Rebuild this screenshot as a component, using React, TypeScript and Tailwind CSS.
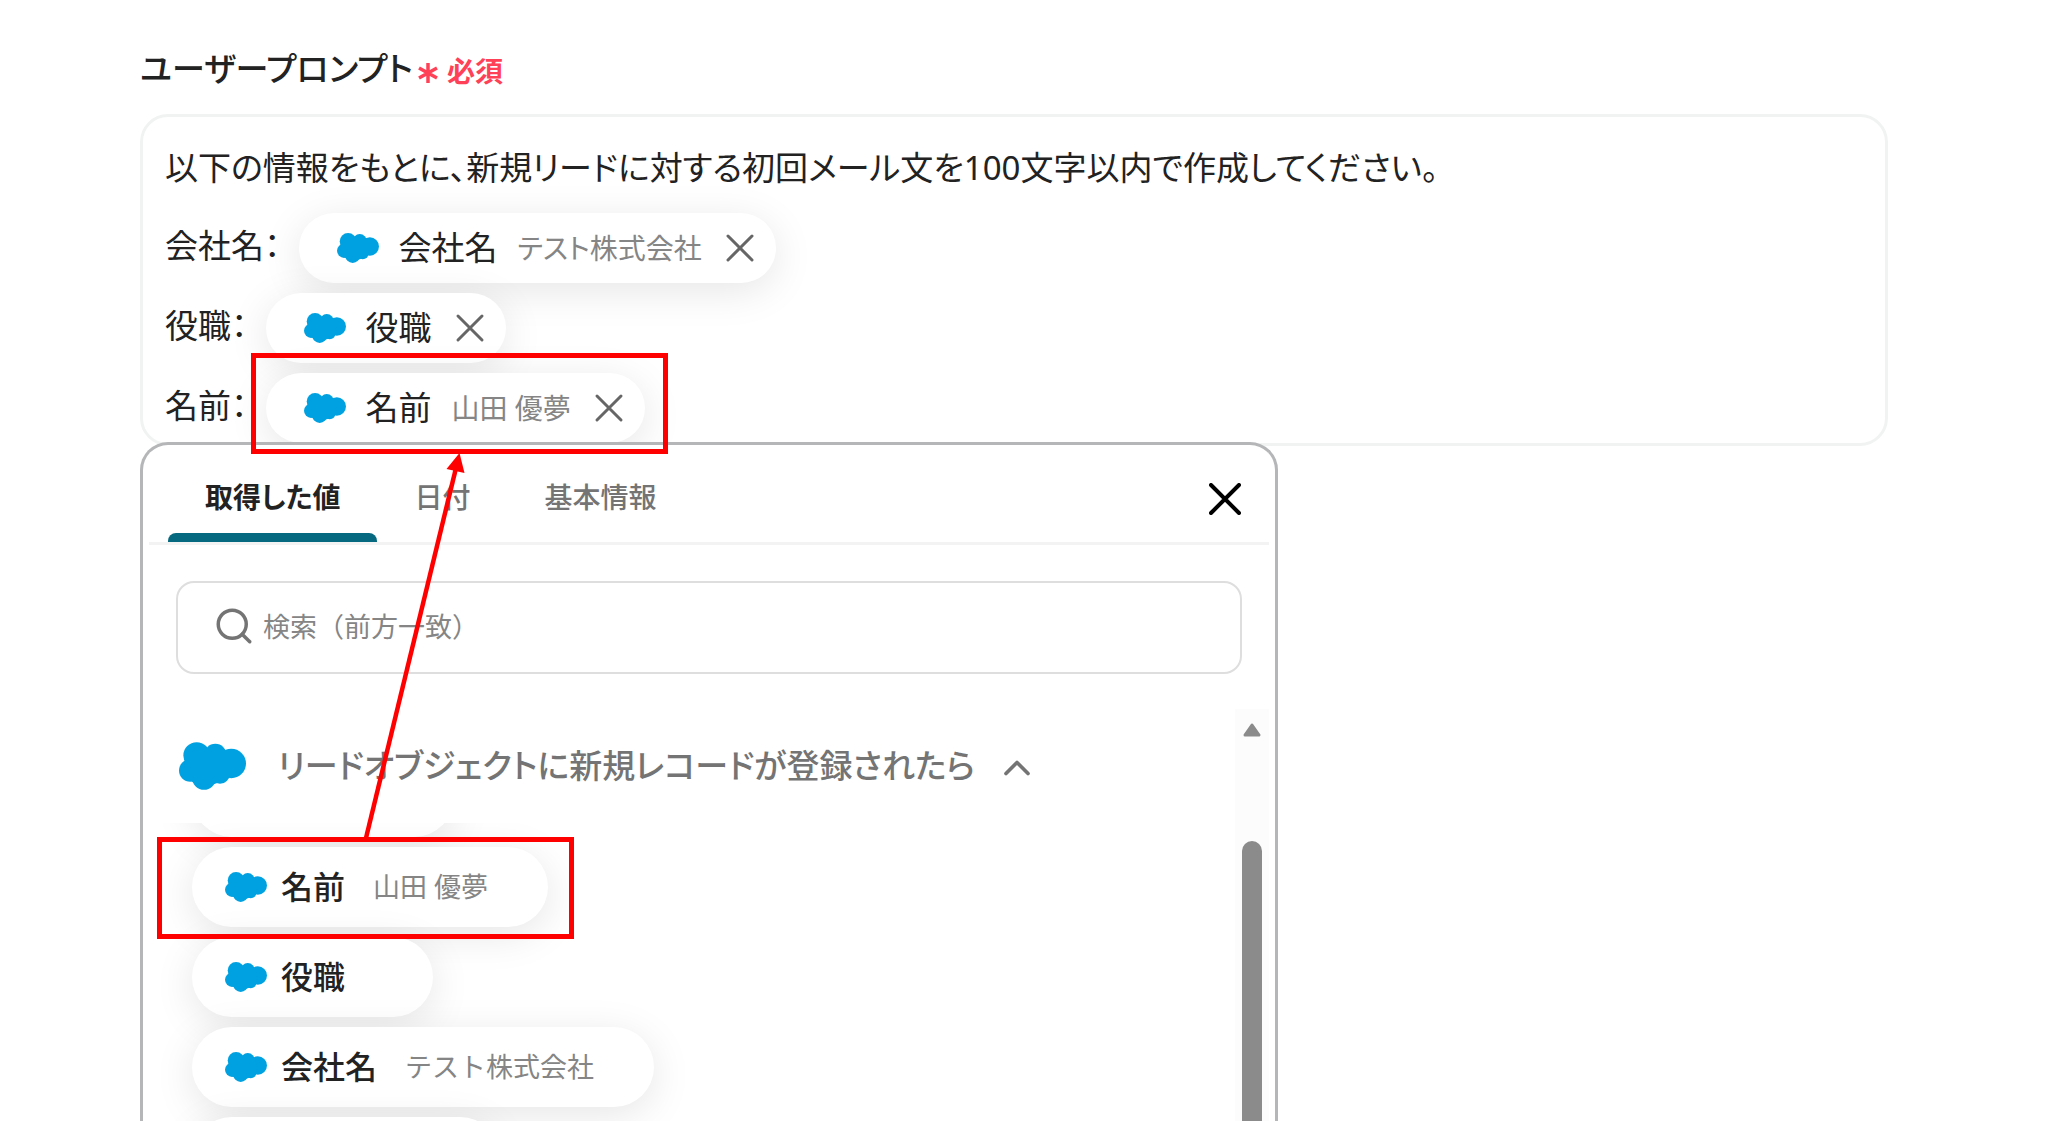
import clsx from "clsx";
import { ChevronUp, Search } from "lucide-react";
import { useState } from "react";

type Field = { label: string; sample?: string };

const TABS = ["取得した値", "日付", "基本情報"];

const COMPANY: Field = { label: "会社名", sample: "テスト株式会社" };
const POSITION: Field = { label: "役職" };
const NAME: Field = { label: "名前", sample: "山田 優夢" };

function Cloud({ className }: { className?: string }) {
  return (
    <svg className={clsx("shrink-0 fill-[#00a1e0]", className)} viewBox="58 67 201 143" aria-hidden="true">
      <circle cx="111" cy="107" r="40" />
      <circle cx="167" cy="106" r="34" />
      <circle cx="215" cy="131" r="44" />
      <circle cx="92" cy="152" r="34" />
      <circle cx="133" cy="175" r="35" />
      <circle cx="181" cy="163" r="29" />
      <path d="M74 125L111 80L141 85L167 80L196 93L215 131L206 176L181 186L163 193L133 195L100 188L76 165z" />
    </svg>
  );
}

function PromptRow({ field, onRemove }: { field: Field; onRemove: () => void }) {
  return (
    <div className="flex h-[70px] items-center gap-[18px]">
      <span className="pb-1 leading-8">{field.label}：</span>
      <span className="flex h-full items-center rounded-full bg-white pr-5 pl-[38px] shadow-[0_8px_40px_rgba(0,0,0,0.1)]">
        <Cloud className="h-[30px] w-[42px]" />
        <span className="ml-5">{field.label}</span>
        {field.sample && <span className="ml-5 text-[28px] text-[#858585]">{field.sample}</span>}
        <button type="button" className="ml-[22px] text-[#666]" aria-label={`${field.label}を削除`} onClick={onRemove}>
          <svg className="size-8" viewBox="0 0 32 32" fill="none" stroke="currentColor" strokeWidth="3" strokeLinecap="round">
            <path d="M4 4l24 24M28 4L4 28" />
          </svg>
        </button>
      </span>
    </div>
  );
}

function FieldOption({ field }: { field: Field }) {
  return (
    <li>
      <button
        type="button"
        className="flex h-20 items-center rounded-full bg-white pr-[60px] pl-[33px] shadow-[0_8px_40px_rgba(0,0,0,0.1)]"
      >
        <Cloud className="h-[32px] w-[42px]" />
        <span className="ml-[14px] text-[32px] font-medium text-[#222]">{field.label}</span>
        <span className="ml-7 text-[27px] text-[#858585]">{field.sample}</span>
      </button>
    </li>
  );
}

// Red frames and the arrow that explain where the picked value goes
function Callouts() {
  return (
    <svg className="pointer-events-none absolute top-0 left-0 h-[1121px] w-[700px]" viewBox="0 0 700 1121" fill="none" aria-hidden="true">
      <g stroke="#ff0000" strokeWidth="5">
        <rect x="253.500" y="355.500" width="412" height="96" />
        <rect x="159.500" y="839.500" width="412" height="97" />
        <path d="M366 838L456 468" strokeWidth="4.500" />
      </g>
      <path d="M459.500 453L464.500 473L446.500 469z" fill="#ff0000" />
    </svg>
  );
}

export default function App() {
  const [tab, setTab] = useState(TABS[0]);
  const [fields, setFields] = useState([COMPANY, POSITION, NAME]);

  return (
    <main className="relative flex h-screen flex-col overflow-hidden bg-white pr-40 pl-35 font-['Noto_Sans','Noto_Sans_CJK_JP',sans-serif] text-[#222]">
      <div className="flex h-[114px] shrink-0 items-center gap-1 pt-7 [font-feature-settings:'palt']">
        <h1 id="prompt-label" className="pb-1 text-[33px] font-medium">ユーザープロンプト</h1>
        <span className="flex items-center gap-2 text-[28px] font-bold text-[#ff4158]">
          <svg className="mt-1 size-[22px]" viewBox="0 0 22 22" fill="none" stroke="currentColor" strokeWidth="3.500" aria-hidden="true">
            <path d="M11 1v20M2 6l18 10M20 6L2 16" />
          </svg>
          必須
        </span>
      </div>

      <section
        aria-labelledby="prompt-label"
        className="flex shrink-0 flex-col gap-[10px] rounded-[28px] border-3 border-[#f1f3f3] px-[22px] pt-4 text-[33px] [font-feature-settings:'palt']"
      >
        <p className="h-[70px] leading-[70px]">
          以下の情報をもとに、新規リードに対する初回メール文を100文字以内で作成してください。
        </p>
        {fields.map((field) => (
          <PromptRow
            key={field.label}
            field={field}
            onRemove={() => setFields(fields.filter((f) => f !== field))}
          />
        ))}
      </section>

      <section className="-mt-1 flex min-h-0 w-full max-w-[1138px] flex-1 flex-col rounded-t-[28px] border-3 border-b-0 border-[#b4b6b8] bg-white">
        <div className="mx-[6px] flex h-[100px] shrink-0 items-stretch border-b-3 border-[#f3f3f3] pt-[10px] pr-7 pl-[19px]">
          <div role="tablist" className="flex flex-1 [font-feature-settings:'palt']">
            {TABS.map((name) => (
              <button
                key={name}
                type="button"
                role="tab"
                aria-selected={tab === name}
                className={clsx(
                  "relative px-[37px] pb-1 text-[28px]",
                  tab === name ? "font-bold text-[#222]" : "font-medium text-[#747474]",
                )}
                onClick={() => setTab(name)}
              >
                {name}
                {tab === name && (
                  <span className="absolute inset-x-0 bottom-0 h-[9px] rounded-t-lg bg-[#06697f]" />
                )}
              </button>
            ))}
          </div>
          <button type="button" aria-label="閉じる" className="text-black">
            <svg className="size-8" viewBox="0 0 32 32" fill="none" stroke="currentColor" strokeWidth="4" strokeLinecap="round">
              <path d="M2 2l28 28M30 2L2 30" />
            </svg>
          </button>
        </div>

        <label className="mx-[33px] mt-[36px] flex h-[93px] shrink-0 items-center rounded-[18px] border-2 border-[#dedede] pl-[35px]">
          <Search className="mb-1 size-[42px] shrink-0 text-[#747474]" strokeWidth={2} aria-hidden="true" />
          <input
            type="search"
            aria-label="検索"
            placeholder="検索（前方一致）"
            className="ml-2 min-w-0 flex-1 text-[27px] outline-none placeholder:text-[#858585]"
          />
        </label>

        <div className="mt-[35px] flex min-h-0 flex-1">
          <div className="flex min-w-0 flex-1 flex-col">
            <button
              type="button"
              aria-expanded="true"
              className="flex h-[114px] shrink-0 items-center pl-9 text-[33px] font-medium text-[#747474]"
            >
              <Cloud className="h-[48px] w-[67px]" />
              <span className="ml-8 [font-feature-settings:'palt']">
                リードオブジェクトに新規レコードが登録されたら
              </span>
              <ChevronUp className="mt-1 ml-5 size-11" strokeWidth={2} aria-hidden="true" />
            </button>
            <div className="min-h-0 flex-1 overflow-hidden pl-[49px]">
              <ul className="-mt-[66px] flex flex-col items-start gap-[10px]">
                <li className="h-20 w-[262px] rounded-full bg-white shadow-[0_8px_40px_rgba(0,0,0,0.1)]" />
                <FieldOption field={NAME} />
                <FieldOption field={POSITION} />
                <FieldOption field={COMPANY} />
                <li className="h-20 w-[308px] rounded-full bg-white shadow-[0_8px_40px_rgba(0,0,0,0.1)]" />
              </ul>
            </div>
          </div>
          <div className="mr-[6px] flex w-[34px] flex-col items-center bg-[#fcfcfc] pt-[14px]">
            <svg className="h-[14px] w-[18px] shrink-0 fill-[#8b8b8b] stroke-[#8b8b8b]" viewBox="0 0 18 14" strokeWidth="3" strokeLinejoin="round" aria-hidden="true">
              <path d="M9 2l7 10H2z" />
            </svg>
            <div className="mt-[104px] w-5 flex-1 rounded-t-full bg-[#8b8b8b]" />
          </div>
        </div>
      </section>

      <Callouts />
    </main>
  );
}
